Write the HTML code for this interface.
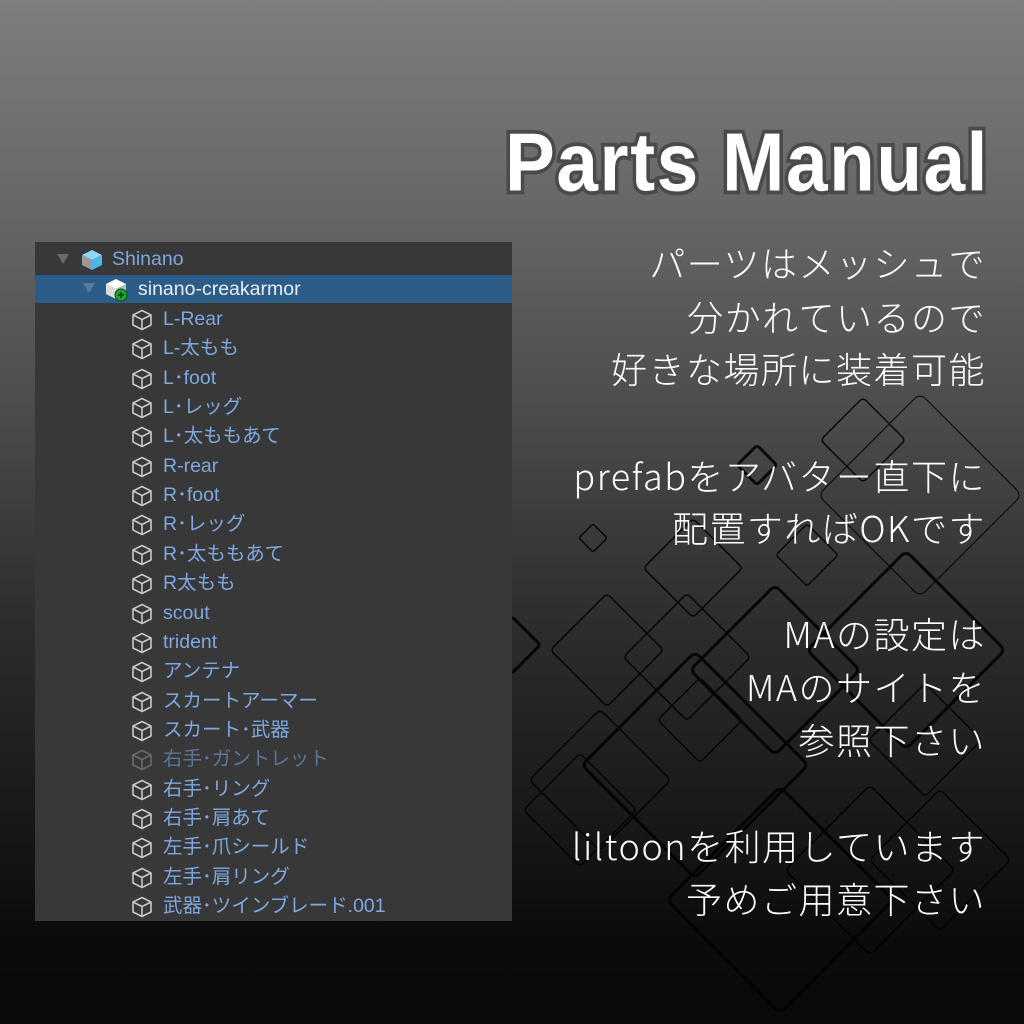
<!DOCTYPE html>
<html><head><meta charset="utf-8"><style>
body{margin:0;width:1024px;height:1024px;overflow:hidden;position:relative;background:linear-gradient(#7e7e7e 0%,#676767 20%,#4c4c4c 40%,#2e2e2e 60%,#181818 80%,#0b0b0b 92%,#0a0a0a 100%);font-family:"Liberation Sans","Noto Sans CJK JP",sans-serif}
svg.bg{position:absolute;left:0;top:0}
.title{position:absolute;left:505px;top:112px;font-family:"Liberation Sans",sans-serif;font-weight:bold;font-size:96px;line-height:100px;color:#fff;-webkit-text-stroke:9px #4a4a4a;paint-order:stroke fill;white-space:nowrap;transform-origin:0 0;letter-spacing:2px}
.rt{position:absolute;right:38px;font-family:"Noto Sans CJK JP",sans-serif;font-weight:300;font-size:36px;letter-spacing:1.5px;color:#fff;white-space:nowrap;line-height:1}
.panel{position:absolute;left:35px;top:242px;width:477px;height:679px;background:#383838;overflow:hidden}
.row{position:absolute;left:0;width:477px;height:29px;font-size:19.5px;color:#7ea8e0;font-family:"Liberation Sans","Noto Sans CJK JP",sans-serif}
.row span{position:absolute;top:2px;left:128px;white-space:nowrap;line-height:24px;height:24px}
.row svg{position:absolute;left:96px;top:4px}
.sel{background:#2c5d89}
</style></head><body>
<svg class="bg" width="1024" height="1024" fill="none" stroke="#000" stroke-linejoin="round" opacity="0.85">
<g stroke-width="1.5">
<rect x="-100" y="-100" width="200" height="200" rx="10" transform="translate(920,495) rotate(45) scale(0.72)" />
<rect x="-30" y="-30" width="60" height="60" rx="4" transform="translate(863,440) rotate(45)" />
<rect x="-10" y="-10" width="20" height="20" rx="2" transform="translate(593,538) rotate(45)" />
<rect x="-35" y="-35" width="70" height="70" rx="4" transform="translate(693,568) rotate(45)" />
<rect x="-22" y="-22" width="44" height="44" rx="3" transform="translate(807,555) rotate(45)" />
<rect x="-45" y="-45" width="90" height="90" rx="4" transform="translate(687,657) rotate(45)" />
<rect x="-40" y="-40" width="80" height="80" rx="4" transform="translate(607,650) rotate(45)" />
<rect x="-50" y="-50" width="100" height="100" rx="5" transform="translate(600,780) rotate(45)" />
<rect x="-40" y="-40" width="80" height="80" rx="4" transform="translate(580,810) rotate(45)" />
<rect x="-60" y="-60" width="120" height="120" rx="5" transform="translate(870,870) rotate(45)" />
<rect x="-40" y="-40" width="80" height="80" rx="4" transform="translate(925,740) rotate(45)" />
<rect x="-30" y="-30" width="60" height="60" rx="4" transform="translate(700,720) rotate(45)" />
<rect x="-50" y="-50" width="100" height="100" rx="4" transform="translate(940,860) rotate(45)" />
</g>
<g stroke-width="3">
<rect x="-70" y="-70" width="140" height="140" rx="6" transform="translate(906,650) rotate(45)" />
<rect x="-80" y="-80" width="160" height="160" rx="6" transform="translate(695,765) rotate(45)" />
<rect x="-60" y="-60" width="120" height="120" rx="6" transform="translate(775,670) rotate(45)" />
<rect x="-14" y="-14" width="28" height="28" rx="3" transform="translate(757,465) rotate(45)" />
<rect x="-80" y="-80" width="160" height="160" rx="6" transform="translate(780,900) rotate(45)" />
<rect x="-20" y="-20" width="40" height="40" rx="3" transform="translate(512,645) rotate(45)" />
</g>
</svg>
<div class="title" id="t">Parts Manual</div>
<div class="rt" style="top:244px">パーツはメッシュで</div>
<div class="rt" style="top:298px">分かれているので</div>
<div class="rt" style="top:350px">好きな場所に装着可能</div>
<div class="rt" style="top:457px">prefabをアバター直下に</div>
<div class="rt" style="top:509px">配置すればOKです</div>
<div class="rt" style="top:615px">MAの設定は</div>
<div class="rt" style="top:668px">MAのサイトを</div>
<div class="rt" style="top:721px">参照下さい</div>
<div class="rt" style="top:827px">liltoonを利用しています</div>
<div class="rt" style="top:880px">予めご用意下さい</div>
<div class="panel">
<div class="row" style="top:3px"><svg width="60" height="24" style="left:20px;top:3px"><polygon points="2,6 14,6 8,16" fill="#6a6a6a"/><g transform="translate(26,0)"><polygon points="11,2 21,7 11,12 1,7" fill="#8fd8f5"/><polygon points="1,7 11,12 11,22 1,17" fill="#9a9a9a"/><polygon points="21,7 11,12 11,22 21,17" fill="#4bb6e8"/></g></svg><span style="left:77px">Shinano</span></div>
<div class="row sel" style="top:33px;height:28px"><svg width="60" height="26" style="left:46px;top:2px"><polygon points="2,6 14,6 8,16" fill="#587b9a"/><g transform="translate(24,0)"><polygon points="11,2 21,7 11,12 1,7" fill="#fff"/><polygon points="1,7 11,12 11,22 1,17" fill="#ddd"/><polygon points="21,7 11,12 11,22 21,17" fill="#bbb"/><circle cx="16" cy="18" r="6" fill="#1fa32c" stroke="#0b4d12"/><path d="M16 15v6M13 18h6" stroke="#0b3a0f" stroke-width="1.5"/></g></svg><span style="left:103px;color:#e8eef5">sinano-creakarmor</span></div>
</div>
<script>
var items=["L-Rear","L-太もも","L･foot","L･レッグ","L･太ももあて","R-rear","R･foot","R･レッグ","R･太ももあて","R太もも","scout","trident","アンテナ","スカートアーマー","スカート･武器","右手･ガントレット","右手･リング","右手･肩あて","左手･爪シールド","左手･肩リング","武器･ツインブレード.001"];
var p=document.querySelector('.panel'),h='';
items.forEach(function(t,i){var dim=i==15;var c=dim?'#6a6a6a':'#c8c8c8';
h+='<div class="row" style="top:'+(63+i*29.35)+'px"><svg width="22" height="22" fill="none" stroke="'+c+'" stroke-width="1.6" stroke-linejoin="round"><path d="M11 1.5L20 6v10l-9 4.5L2 16V6z M2 6l9 4.5L20 6 M11 10.5v10"/></svg><span'+(dim?' style="color:#5c7698"':'')+'>'+t+'</span></div>';});
p.insertAdjacentHTML('beforeend',h);
var t=document.getElementById('t');var r=t.getBoundingClientRect();t.style.transform='scale('+(484/r.width)+',0.86)';t.style.top='120px';
</script>
</body></html>
